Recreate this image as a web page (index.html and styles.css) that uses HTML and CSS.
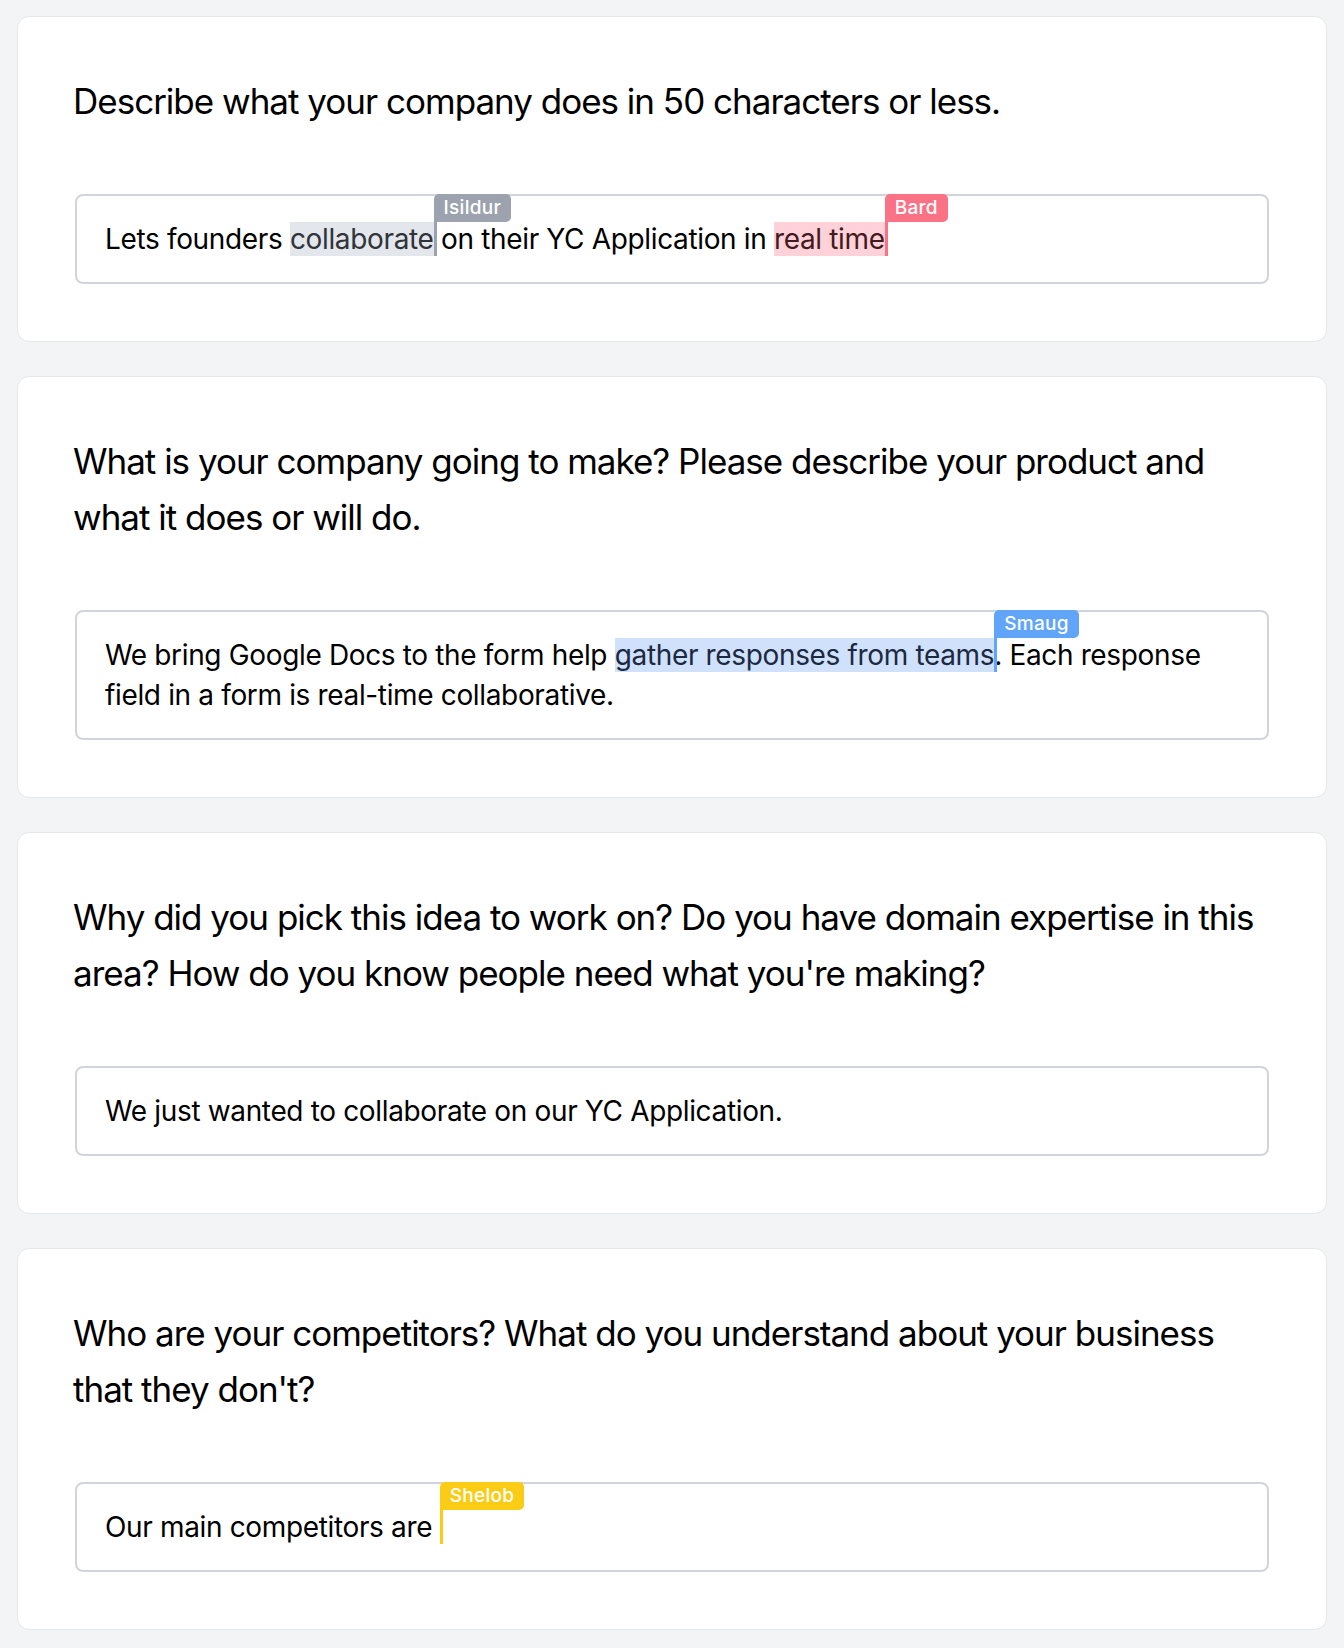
FILE: index.html
```html
<!DOCTYPE html>
<html lang="en">
<head>
<meta charset="utf-8">
<title>YC Application</title>
<link rel="stylesheet" href="styles.css">
</head>
<body>
<main class="form">
  <section class="card">
    <h2 class="question">Describe what your company does in 50 characters or less.</h2>
    <div class="answer">Lets founders <span class="hl hl-gray">collaborate</span><span class="cursor cursor-gray"><span class="cursor-label">Isildur</span></span> on their YC Application in <span class="hl hl-rose">real time</span><span class="cursor cursor-rose"><span class="cursor-label">Bard</span></span></div>
  </section>
  <section class="card">
    <h2 class="question">What is your company going to make? Please describe your product and what it does or will do.</h2>
    <div class="answer">We bring Google Docs to the form help <span class="hl hl-blue">gather responses from teams</span><span class="cursor cursor-blue"><span class="cursor-label">Smaug</span></span>. Each response field in a form is real-time collaborative.</div>
  </section>
  <section class="card">
    <h2 class="question">Why did you pick this idea to work on? Do you have domain expertise in this area? How do you know people need what you're making?</h2>
    <div class="answer">We just wanted to collaborate on our YC Application.</div>
  </section>
  <section class="card">
    <h2 class="question">Who are your competitors? What do you understand about your business that they don't?</h2>
    <div class="answer">Our main competitors are&nbsp;<span class="cursor cursor-yellow"><span class="cursor-label">Shelob</span></span></div>
  </section>
</main>
</body>
</html>
```

FILE: styles.css
```css
* { box-sizing: border-box; }

html, body {
  margin: 0;
  background: #f3f4f6;
}

body {
  padding: 16px 17px 18px 17px;
  font-family: Inter, "Noto Sans", "Liberation Sans", sans-serif;
  color: #000;
}

.form {
  display: flex;
  flex-direction: column;
  gap: 34px;
}

.card {
  background: #fff;
  border: 1px solid #e5e7eb;
  border-radius: 12px;
  padding: 56px 57px 57px;
}

.question {
  margin: 0 0 65px -2px;
  font-size: 35px;
  line-height: 56px;
  font-weight: 400;
  letter-spacing: -1px;
  color: #000;
}

.answer {
  border: 2px solid #d1d5db;
  border-radius: 8px;
  padding: 23px 28px;
  font-size: 28px;
  line-height: 40px;
  letter-spacing: -0.35px;
  color: #000;
}

.hl-gray { background: #e3e6ea; color: #30343a; }
.hl-rose { background: #fed2d8; color: #431a20; }
.hl-blue { background: #cfe1fb; color: #1c2942; }

.cursor {
  position: relative;
}

.cursor::before {
  content: "";
  position: absolute;
  left: 0;
  top: 0;
  width: 3px;
  height: 34px;
  background: var(--c);
}

.cursor-label {
  position: absolute;
  left: 0;
  bottom: 34px;
  height: 28px;
  padding: 0 10px;
  border-radius: 5px 5px 5px 0;
  background: var(--c);
  color: #fff;
  font-size: 19px;
  line-height: 28px;
  font-weight: 500;
  letter-spacing: 0.3px;
  white-space: nowrap;
}

.cursor-gray { --c: #9ca3af; }
.cursor-rose { --c: #fb7185; }
.cursor-blue { --c: #60a5fa; }
.cursor-yellow { --c: #facc15; }
```
